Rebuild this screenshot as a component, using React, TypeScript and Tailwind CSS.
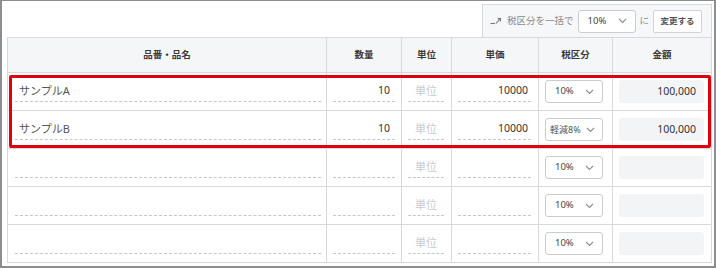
import React from "react";

const font = { fontFamily: '"Noto Sans", "Noto Sans CJK JP", sans-serif' };

function Chevron() {
  return (
    <svg width="9" height="6" viewBox="0 0 9 6" className="shrink-0">
      <path d="M1 1l3.5 3.5L8 1" fill="none" stroke="#8a8f96" strokeWidth="1.1" />
    </svg>
  );
}

function TaxSelect({ value, small }: { value: string; small?: boolean }) {
  return (
    <div
      className={`flex h-[23px] w-[58px] items-center justify-between rounded-[3px] border border-[#c9cdd2] bg-white ${
        small ? "pl-[4px] pr-[7px]" : "pl-[9px] pr-[8px]"
      }`}
    >
      <span className={small ? "whitespace-nowrap text-[9px] text-[#555]" : "text-[9.5px] text-[#444]"}>{value}</span>
      <Chevron />
    </div>
  );
}

type Row = { name: string; qty: string; price: string; tax: string; amount: string; small?: boolean };

const rows: Row[] = [
  { name: "サンプルA", qty: "10", price: "10000", tax: "10%", amount: "100,000" },
  { name: "サンプルB", qty: "10", price: "10000", tax: "軽減8%", amount: "100,000", small: true },
  { name: "", qty: "", price: "", tax: "10%", amount: "" },
  { name: "", qty: "", price: "", tax: "10%", amount: "" },
  { name: "", qty: "", price: "", tax: "10%", amount: "" },
];

const dash = "border-b border-dashed border-[#c4c8cd]";

export default function App() {
  return (
    <div
      style={font}
      className="relative h-[268px] w-[716px] overflow-hidden border-t border-b-2 border-l-2 border-r-2 border-[#8d8d8d] bg-white pl-[5px]"
    >
      {/* toolbar */}
      <div className="flex justify-end pr-[2px] pt-[3px]">
        <div className="flex h-[33px] w-[230px] items-center whitespace-nowrap border-l border-r border-t border-[#d6dadf] bg-[#f6f7f9] pl-[7px]">
          <svg width="12" height="8" viewBox="0 0 12 8" className="mr-[5px] shrink-0">
            <path d="M0.5 6.5h4.5" stroke="#777" strokeWidth="1.1" fill="none" />
            <path d="M6 6.5L10 2.2" stroke="#777" strokeWidth="1.1" fill="none" />
            <path d="M7.6 1.6h2.9v2.9" stroke="#777" strokeWidth="1.1" fill="none" />
          </svg>
          <span className="shrink-0 text-[9.5px] text-[#8a8a8a]">税区分を一括で</span>
          <div className="ml-[4px] flex h-[23px] w-[58px] shrink-0 items-center justify-between rounded-[3px] border border-[#c9cdd2] bg-white pl-[9px] pr-[8px]">
            <span className="text-[9.5px] text-[#444]">10%</span>
            <Chevron />
          </div>
          <span className="ml-[4px] shrink-0 text-[9.5px] text-[#8a8a8a]">に</span>
          <div className="ml-[4px] flex h-[23px] w-[49px] shrink-0 items-center justify-center rounded-[2px] border border-[#d0d4d8] bg-white text-[8.5px] font-bold text-[#555]">
            変更する
          </div>
        </div>
      </div>

      {/* table */}
      <div className="w-[705px] border-l border-t border-[#d6dadf]">
        <div className="flex h-[35px] border-b border-[#d6dadf] bg-[#f5f6f8] text-[9.5px] font-bold text-[#3a3a3a]">
          <div className="flex w-[319px] items-center justify-center border-r border-[#d6dadf]">品番・品名</div>
          <div className="flex w-[75px] items-center justify-center border-r border-[#d6dadf]">数量</div>
          <div className="flex w-[50px] items-center justify-center border-r border-[#d6dadf]">単位</div>
          <div className="flex w-[87px] items-center justify-center border-r border-[#d6dadf]">単価</div>
          <div className="flex w-[74px] items-center justify-center border-r border-[#d6dadf]">税区分</div>
          <div className="flex w-[99px] items-center justify-center border-r border-[#d6dadf]">金額</div>
        </div>
        {rows.map((r, i) => (
          <div key={i} className="flex h-[38px] border-b border-[#d6dadf] text-[#555]">
            <div className="flex w-[319px] items-center border-r border-[#d6dadf] pl-[7px] pr-[5px]">
              <div className={`flex h-[20px] w-full items-center pl-[4px] text-[11px] text-[#555] ${dash}`}>{r.name}</div>
            </div>
            <div className="flex w-[75px] items-center border-r border-[#d6dadf] pl-[6px] pr-[6px]">
              <div className={`flex h-[20px] w-full items-center justify-end pr-[5px] text-[10.5px] text-[#333] ${dash}`}>
                {r.qty}
              </div>
            </div>
            <div className="flex w-[50px] items-center border-r border-[#d6dadf] pl-[6px] pr-[7px]">
              <div className={`flex h-[20px] w-full items-center justify-center text-[11px] text-[#c8ccd0] ${dash}`}>
                単位
              </div>
            </div>
            <div className="flex w-[87px] items-center border-r border-[#d6dadf] pl-[6px] pr-[7px]">
              <div className={`flex h-[20px] w-full items-center justify-end pr-[3px] text-[10.5px] text-[#333] ${dash}`}>
                {r.price}
              </div>
            </div>
            <div className="flex w-[74px] items-center border-r border-[#d6dadf] pl-[6px]">
              <TaxSelect value={r.tax} small={r.small} />
            </div>
            <div className="flex w-[99px] items-center border-r border-[#d6dadf] pl-[6px]">
              <div className="flex h-[23px] w-[85px] items-center justify-end rounded-[3px] bg-[#f3f4f6] pr-[8px] text-[10.5px] text-[#333]">
                {r.amount}
              </div>
            </div>
          </div>
        ))}
      </div>

      {/* annotation */}
      <div className="pointer-events-none absolute left-[7px] top-[74px] h-[73px] w-[702px] rounded-[2px] border-[3px] border-[#e1000f]" />
    </div>
  );
}
